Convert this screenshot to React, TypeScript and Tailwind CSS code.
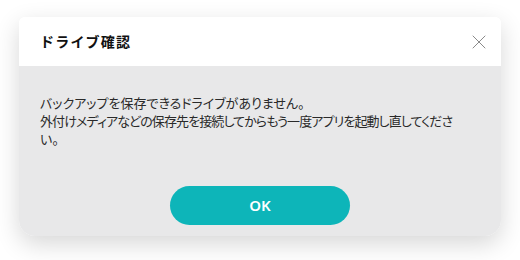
import { X } from 'lucide-react'

const jp = { fontFamily: '"Noto Sans CJK JP", "Noto Sans", sans-serif' }

export default function App() {
  return (
    <div className="w-[520px] h-[260px] bg-white pt-[17px] pl-[19px]" style={jp}>
      <div className="w-[482px] h-[219px] rounded-t-[6px] rounded-b-[16px] overflow-hidden shadow-[0_8px_24px_rgba(0,0,0,0.16)] flex flex-col">
        <div className="h-[49px] bg-white flex items-center justify-between pl-[21px] pr-[10px]">
          <span className="text-[14px] font-bold tracking-[1.2px] text-[#111]">ドライブ確認</span>
          <X className="h-[24px] w-[24px] text-[#8a8a8a]" strokeWidth={1} />
        </div>
        <div className="flex-1 bg-[#e8e8e9] flex flex-col pt-[28px] pl-[21px]">
          <div className="text-[13px] leading-[18px] text-[#2a2a2a] [font-feature-settings:'palt'] whitespace-nowrap">
            <div>バックアップを保存できるドライブがありません。</div>
            <div className="tracking-[-0.9px]">外付けメディアなどの保存先を接続してからもう一度アプリを起動し直してくださ</div>
            <div>い。</div>
          </div>
          <div className="mt-[38px] flex justify-center pr-[21px]">
            <button className="w-[180px] h-[39px] rounded-full bg-[#0db5b9] text-white text-[15px] font-semibold" style={{ fontFamily: '"Noto Sans", sans-serif' }}>
              OK
            </button>
          </div>
        </div>
      </div>
    </div>
  )
}
